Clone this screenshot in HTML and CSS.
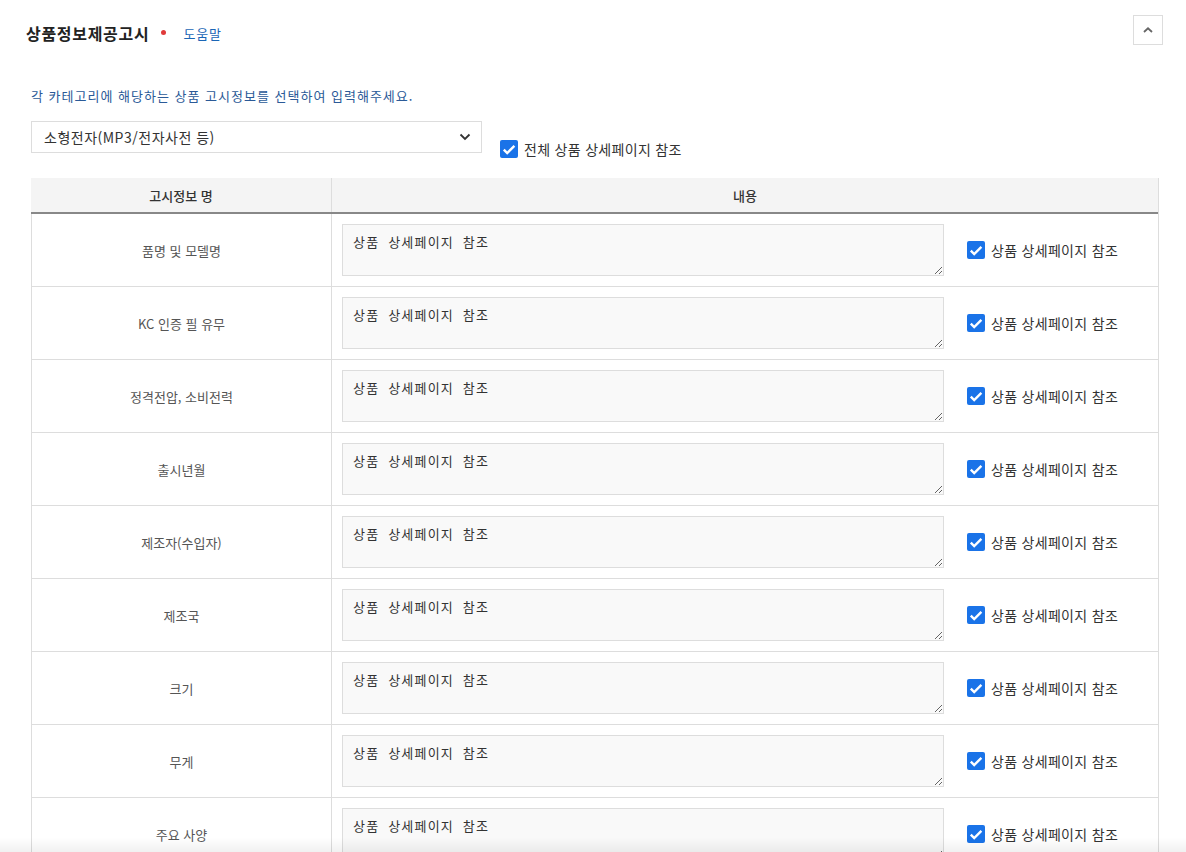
FILE: index.html
```html
<!DOCTYPE html>
<html lang="ko">
<head>
<meta charset="utf-8">
<link rel="stylesheet" href="styles.css">
</head>
<body>
<div class="page">
  <div class="head">
    <h2 class="title">상품정보제공고시</h2>
    <span class="req"></span>
    <a class="help">도움말</a>
    <button class="fold" type="button">
      <svg width="10" height="6" viewBox="0 0 10 6"><path d="M1 5 L5 1.3 L9 5" fill="none" stroke="#666" stroke-width="1.8"/></svg>
    </button>
  </div>
  <div class="body">
    <p class="desc">각 카테고리에 해당하는 상품 고시정보를 선택하여 입력해주세요.</p>
    <div class="controls">
      <div class="select">
        <span>소형전자(MP3/전자사전 등)</span>
        <svg width="12" height="8" viewBox="0 0 12 8"><path d="M1.5 1.5 L6 6 L10.5 1.5" fill="none" stroke="#333" stroke-width="1.8"/></svg>
      </div>
      <label class="chk all"><span class="box"><svg width="14" height="11" viewBox="0 0 14 11"><path d="M1.8 5.6 L5.2 9 L12.4 1.8" fill="none" stroke="#fff" stroke-width="2.4"/></svg></span>전체 상품 상세페이지 참조</label>
    </div>
    <div class="table">
      <div class="thead">
        <div class="c1">고시정보 명</div>
        <div class="c2">내용</div>
      </div>
      <div id="rows"></div>
    </div>
  </div>
</div>
<div class="fade"></div>
<script>
var names = ["품명 및 모델명","KC 인증 필 유무","정격전압, 소비전력","출시년월","제조자(수입자)","제조국","크기","무게","주요 사양"];
var html = "";
names.forEach(function(n){
  html += '<div class="row"><div class="c1">' + n + '</div><div class="c2"><textarea class="ta">상품 상세페이지 참조</textarea>' +
  '<label class="chk"><span class="box"><svg width="14" height="11" viewBox="0 0 14 11"><path d="M1.8 5.6 L5.2 9 L12.4 1.8" fill="none" stroke="#fff" stroke-width="2.4"/></svg></span>상품 상세페이지 참조</label></div></div>';
});
document.getElementById("rows").innerHTML = html;
</script>
</body>
</html>
```

FILE: styles.css
```css
html, body { margin: 0; padding: 0; background: #fff; }
body { font-family: "Noto Sans CJK KR", "Noto Sans", sans-serif; color: #333; overflow: hidden; height: 852px; }
.page { width: 1186px; }
.head { display: flex; align-items: center; height: 30px; padding: 15px 23px 0 26px; }
.title { margin: 6px 0 0; font-size: 16px; font-weight: 700; color: #222; letter-spacing: 0.7px; }
.req { width: 5px; height: 5px; border-radius: 50%; background: #e03a3a; margin: 5px 0 0 12px; }
.help { margin: 6px 0 0 17px; font-size: 13px; color: #1b66b6; letter-spacing: 0.8px; }
.fold { margin-left: auto; width: 30px; height: 30px; border: 1px solid #ddd; background: #fff; display: flex; align-items: center; justify-content: center; padding: 0; }
.body { padding: 0 28px 0 31px; }
.desc { margin: 42px 0 0; font-size: 13px; color: #2b5a97; line-height: 18px; letter-spacing: 1px; }
.controls { display: flex; align-items: flex-start; margin-top: 16px; }
.select { height: 30px; border: 1px solid #ddd; display: flex; align-items: center; justify-content: space-between; padding: 0 10px 0 12px; box-sizing: content-box; width: 427px; font-size: 14px; color: #333; letter-spacing: 0.5px; }
.chk { display: flex; align-items: center; font-size: 14px; color: #333; white-space: nowrap; letter-spacing: 0.3px; }
.box { width: 18px; height: 18px; border-radius: 2px; background: #1a73e8; display: flex; align-items: center; justify-content: center; margin-right: 6px; }
.chk.all { margin: 18px 0 0 18px; }
.table { margin-top: 19px; width: 1127px; border-right: 1px solid #ddd; }
.thead { display: flex; height: 34px; background: #f4f4f4; border-bottom: 2px solid #888; font-size: 13px; font-weight: 500; color: #333; }
.thead .c1 { width: 300px; border-right: 1px solid #ddd; display: flex; align-items: center; justify-content: center; }
.thead .c2 { flex: 1; display: flex; align-items: center; justify-content: center; }
.row { display: flex; height: 72px; border-bottom: 1px solid #ddd; }
.row .c1 { width: 301px; box-sizing: border-box; border-left: 1px solid #ddd; border-right: 1px solid #ddd; display: flex; align-items: center; justify-content: center; font-size: 13px; color: #555; }
.row .c2 { flex: 1; display: flex; align-items: center; padding-left: 10px; }
.ta { width: 602px; height: 52px; box-sizing: border-box; border: 1px solid #ddd; background: #f9f9f9; resize: vertical; font-family: "Noto Sans CJK KR", sans-serif; font-size: 13px; letter-spacing: 1.2px; word-spacing: 4px; color: #333; padding: 8px 10px 0; margin: 0; line-height: 18px; }
.row .chk { margin-left: 23px; }
.fade { position: fixed; left: 0; right: 0; bottom: 0; height: 14px; background: linear-gradient(to bottom, rgba(0,0,0,0), rgba(0,0,0,0.06)); pointer-events: none; }
```
